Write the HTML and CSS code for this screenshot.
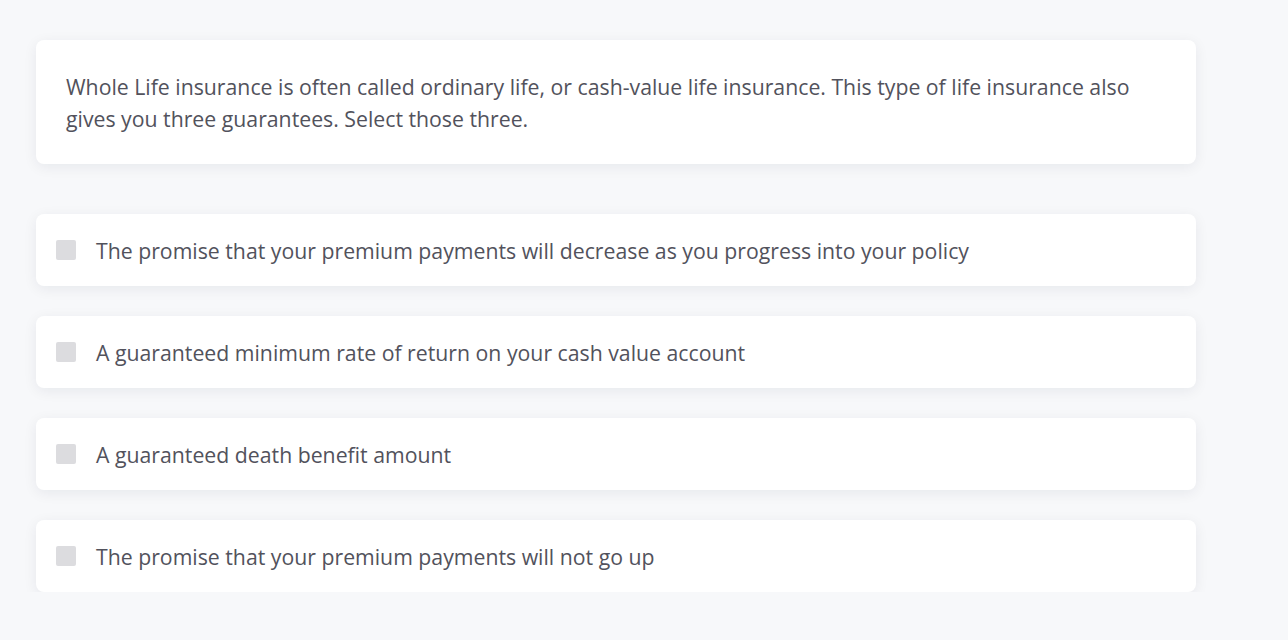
FILE: index.html
```html
<!DOCTYPE html>
<html>
<head>
<meta charset="utf-8">
<link rel="stylesheet" href="styles.css">
</head>
<body>
<main class="quiz">
  <section class="card question">
    <p>Whole Life insurance is often called ordinary life, or cash-value life insurance. This type of life insurance also gives you three guarantees. Select those three.</p>
  </section>
  <ul class="options">
    <li class="card option"><span class="box"></span><span class="label">The promise that your premium payments will decrease as you progress into your policy</span></li>
    <li class="card option"><span class="box"></span><span class="label">A guaranteed minimum rate of return on your cash value account</span></li>
    <li class="card option"><span class="box"></span><span class="label">A guaranteed death benefit amount</span></li>
    <li class="card option"><span class="box"></span><span class="label">The promise that your premium payments will not go up</span></li>
  </ul>
</main>
</body>
</html>
```
FILE: styles.css
```css
html, body {
  margin: 0;
  padding: 0;
  background: #f7f8fa;
}
body {
  font-family: "Open Sans", "Noto Sans", sans-serif;
  color: #52525c;
}
.quiz {
  width: 1160px;
  padding: 40px 0 0 36px;
}
.card {
  background: #fff;
  border-radius: 8px;
  box-shadow: 0 3px 14px rgba(20, 30, 60, 0.07);
}
.question {
  padding: 31px 30px 29px;
}
.question p {
  margin: 0;
  font-size: 21.25px;
  line-height: 32px;
}
.options {
  list-style: none;
  margin: 50px 0 0;
  padding: 0;
  display: flex;
  flex-direction: column;
  gap: 30px;
}
.option {
  height: 72px;
  display: flex;
  align-items: center;
  padding: 0 20px;
  gap: 20px;
  box-sizing: border-box;
}
.box {
  width: 20px;
  height: 20px;
  border-radius: 2px;
  background: #dcdcdf;
  flex: none;
}
.label {
  font-size: 21.25px;
  line-height: 30px;
  padding-top: 2px;
}
```
